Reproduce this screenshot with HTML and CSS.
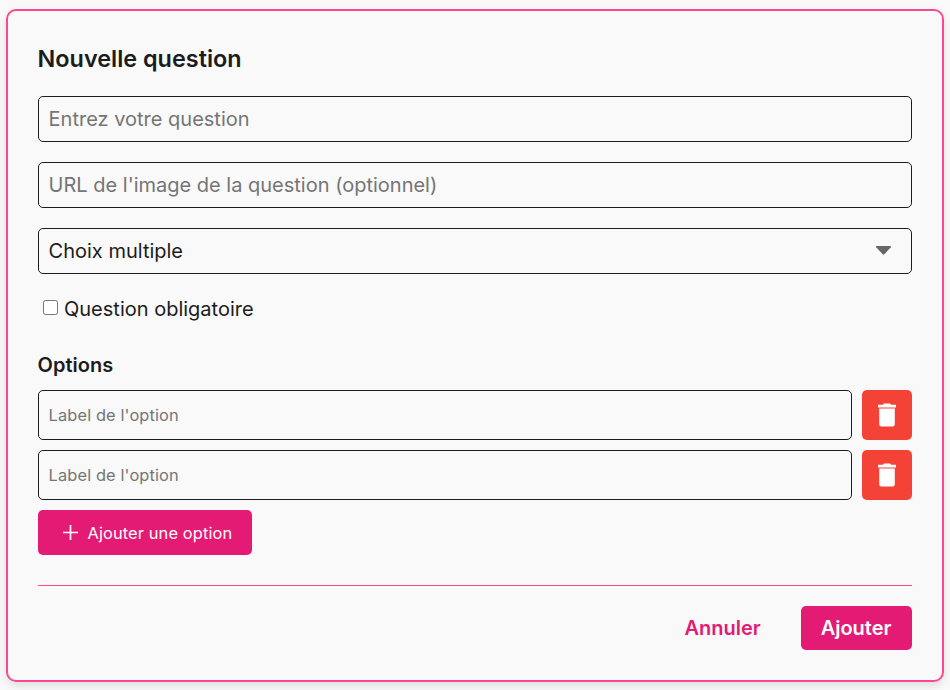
FILE: index.html
```html
<!DOCTYPE html>
<html lang="fr">
<head>
<meta charset="utf-8">
<title>Nouvelle question</title>
<link rel="stylesheet" href="styles.css">
</head>
<body>
<form class="card">
  <h2 class="title">Nouvelle question</h2>
  <input class="field" type="text" placeholder="Entrez votre question">
  <input class="field" type="text" placeholder="URL de l'image de la question (optionnel)">
  <div class="field select">
    <span>Choix multiple</span>
    <svg class="arrow" viewBox="0 0 15 9"><path d="M.6 0h13.8q1 .3.4 1.3L8.3 8.3q-.8.8-1.6 0L.2 1.3Q-.4.3.6 0z"/></svg>
  </div>
  <label class="required"><input class="check" type="checkbox"><span>Question obligatoire</span></label>
  <h3 class="subtitle">Options</h3>
  <div class="option">
    <input class="field small" type="text" placeholder="Label de l'option">
    <button class="delete" type="button" aria-label="Supprimer"><svg viewBox="0 0 18 24"><path d="M.3 1.7h4.5L6 .5h6l1.2 1.2h4.5q.3 0 .3.4v2.5H0V2.1q0-.4.3-.4zM1.2 5.4h15.6v15.5q0 2.5-2.5 2.5H3.7q-2.5 0-2.5-2.5z"/></svg></button>
  </div>
  <div class="option">
    <input class="field small" type="text" placeholder="Label de l'option">
    <button class="delete" type="button" aria-label="Supprimer"><svg viewBox="0 0 18 24"><path d="M.3 1.7h4.5L6 .5h6l1.2 1.2h4.5q.3 0 .3.4v2.5H0V2.1q0-.4.3-.4zM1.2 5.4h15.6v15.5q0 2.5-2.5 2.5H3.7q-2.5 0-2.5-2.5z"/></svg></button>
  </div>
  <button class="add" type="button"><svg viewBox="0 0 15 15"><path d="M7.5 0v15M0 7.5h15"/></svg><span>Ajouter une option</span></button>
  <div class="actions">
    <button class="cancel" type="button">Annuler</button>
    <button class="submit" type="button">Ajouter</button>
  </div>
</form>
</body>
</html>
```
FILE: styles.css
```css
* { box-sizing: border-box; }

body {
  margin: 0;
  padding: 9px 6px 8px;
  background: #f9f9f9;
  color: #1c1c1c;
  font-family: Inter, sans-serif;
  font-size: 20px;
}

button, input { font: inherit; color: inherit; margin: 0; }
button { border: 0; border-radius: 5px; }

.card {
  display: flex;
  flex-direction: column;
  height: 673px;
  padding: 30px;
  border: 2px solid #ff4791;
  border-radius: 10px;
  box-shadow: 0 4px 8px rgba(0, 0, 0, .1);
}

.title {
  margin: 0 0 19px -.4px;
  font-size: 23.4px;
  line-height: 36px;
  font-weight: 600;
}

.field {
  width: 100%;
  height: 46px;
  margin-bottom: 20px;
  padding: 0 9.6px;
  border: 1px solid #1c1c1c;
  border-radius: 5px;
  background: #f9f9f9;
}

.field::placeholder { color: #757575; }

.select {
  display: flex;
  align-items: center;
  justify-content: space-between;
}

.arrow {
  width: 15px;
  height: 9px;
  margin: 0 10.4px 1px 0;
  fill: #666;
}

.required {
  display: flex;
  align-items: center;
  height: 30px;
}

.check {
  appearance: none;
  width: 15px;
  height: 15px;
  margin: 0 6px 4px 5px;
  border: 1px solid #767676;
  border-radius: 2.5px;
  background: #fff;
}

.subtitle {
  margin: 26px 0 10px -.4px;
  font-size: 20px;
  line-height: 30px;
  font-weight: 600;
}

.option {
  display: flex;
  gap: 10px;
  margin-bottom: 10px;
}

.small {
  flex: 1;
  height: 50px;
  margin: 0;
  font-size: 16.4px;
  letter-spacing: .12px;
}

.delete {
  display: flex;
  align-items: center;
  justify-content: center;
  width: 50px;
  height: 50px;
  padding: 0;
  background: #f44336;
}

.delete svg { width: 18px; height: 24px; fill: #fff; }

.add {
  display: flex;
  align-items: center;
  gap: 9.5px;
  width: 214px;
  height: 45px;
  padding: 0 0 0 25px;
  background: #e31b74;
  color: #fff;
  font-size: 16.4px;
  letter-spacing: .12px;
  white-space: nowrap;
}

.add svg { width: 15px; height: 15px; stroke: #fff; stroke-width: 1.7; }

.actions {
  display: flex;
  justify-content: flex-end;
  gap: 20px;
  margin-top: 30px;
  padding-top: 20px;
  border-top: 1px solid #ff4791;
}

.cancel, .submit {
  height: 44px;
  padding: 0 20.5px 0 19.5px;
  font-weight: 600;
}

.cancel { background: none; color: #e31b74; }
.submit { background: #e31b74; color: #fff; }
```
